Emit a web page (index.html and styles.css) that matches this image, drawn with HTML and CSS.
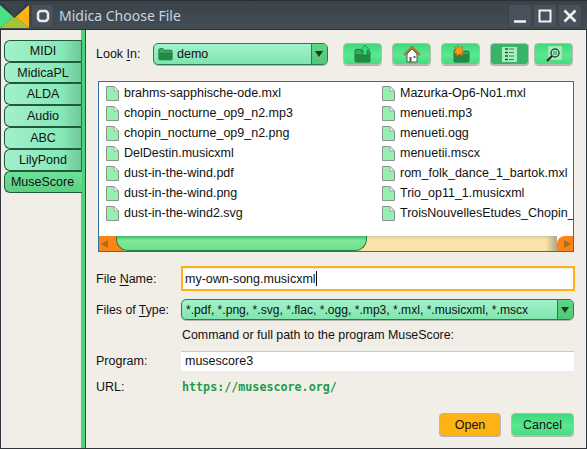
FILE: index.html
```html
<!DOCTYPE html>
<html lang="en">
<head>
  <meta charset="UTF-8" />
  <title>Midica Choose File</title>
  <link rel="stylesheet" href="styles.css">
</head>
<body>
  <svg class="defs" width="0" height="0">
    <symbol id="file" viewBox="0 0 13 15">
      <path d="M.5.5H8L12.500 5V14.500H.5Z" fill="#98f0b0" stroke="#85968c"/>
      <path d="M8 .5V5H12.500Z" fill="#fff" stroke="#9aa5a0"/>
    </symbol>
    <symbol id="folder" viewBox="0 0 18 16">
      <path d="M1 3.500Q1 1.500 3 1.500H6L8 3.500H16Q17 3.500 17 5V14Q17 15 16 15H2Q1 15 1 14Z" fill="#3ea760" stroke="#1d6b38"/>
      <path d="M1.500 6.500H16.500V14.500H1.500Z" fill="#208a45"/>
    </symbol>
  </svg>
  <header class="titlebar">
    <svg class="logo" width="29" height="24" viewBox="0 0 29 24">
      <path d="M0 0 14.500 12 0 24Z" fill="#4ddf83"/>
      <path d="M29 0 14.500 12 29 24Z" fill="#ffb213"/>
      <path d="M0 24 14.500 12 29 24Z" fill="#a5c43a"/>
      <path d="M0 0H3L14.500 12 26 0H29V1L14.500 14 0 1Z" fill="#2f3a44"/>
    </svg>
    <span class="wm-btn wm-app"><svg width="14" height="14" viewBox="0 0 14 14"><rect x="2" y="2" width="10" height="10" rx="3" fill="none" stroke="#e8ecec" stroke-width="2.500"/></svg></span>
    <span class="title">Midica Choose File</span>
    <span class="wm-btn"><svg width="14" height="14" viewBox="0 0 14 14"><path d="M1 12.500H13" stroke="#f2f2f2" stroke-width="2.500"/></svg></span>
    <span class="wm-btn"><svg width="14" height="14" viewBox="0 0 14 14"><rect x="1.500" y="1.500" width="11" height="11" fill="none" stroke="#f2f2f2" stroke-width="2"/></svg></span>
    <span class="wm-btn"><svg width="14" height="14" viewBox="0 0 14 14"><path d="M1.500 1.500 12.500 12.500M12.500 1.500 1.500 12.500" stroke="#f2f2f2" stroke-width="2.500"/></svg></span>
  </header>

  <div class="window">
    <nav class="tabs">
      <div class="tab">MIDI</div>
      <div class="tab">MidicaPL</div>
      <div class="tab">ALDA</div>
      <div class="tab">Audio</div>
      <div class="tab">ABC</div>
      <div class="tab">LilyPond</div>
      <div class="tab active">MuseScore</div>
    </nav>

    <main class="content">
      <div class="lookin">
        <label class="look-label">Look <u>I</u>n:</label>
        <div class="combo look-combo">
          <svg class="combo-folder" width="15" height="14"><use href="#folder"/></svg>
          <span class="combo-text">demo</span>
          <span class="combo-arrow"></span>
        </div>
        <div class="tools">
          <button class="tool">
            <svg width="18" height="18" viewBox="0 0 18 18">
              <use href="#folder" y="3" width="17" height="15"/>
              <path d="M11 0 15.500 5H13V10H9V5H6.500Z" fill="#38e07a" stroke="#157a3a" stroke-width=".7"/>
            </svg>
          </button>
          <button class="tool">
            <svg width="18" height="18" viewBox="0 0 18 18">
              <path d="M4 9V17H14V9L9 4Z" fill="#fff" stroke="#555"/>
              <path d="M6.500 12H8.500V17H6.500Z" fill="#7a5320"/>
              <path d="M10.500 11H12.500V13H10.500Z" fill="#3a66b0"/>
              <path d="M1 10 9 2 17 10" fill="none" stroke="#a87a28" stroke-width="2"/>
            </svg>
          </button>
          <button class="tool">
            <svg width="18" height="18" viewBox="0 0 18 18">
              <use href="#folder" x="1" y="3" width="17" height="15"/>
              <path d="M6 0 7.500 3.500 11 1.500 9.500 5 13 6 9.500 7.500 10.500 11 7 9 4.500 11.500 4.500 8 1 7 4 5 2.500 2 5 3.500Z" fill="#ff9a13" stroke="#d84a10" stroke-width=".5"/>
            </svg>
          </button>
          <button class="tool tool-on">
            <svg width="15" height="15" viewBox="0 0 15 15">
              <rect width="15" height="15" fill="#a6efbd"/>
              <path d="M3 2H6M3 5.500H6M3 9H6M3 12.500H6" stroke="#1c5a34" stroke-width="1.600"/>
              <path d="M7 2H12M7 5.500H12M7 9H12M7 12.500H12" stroke="#2f8a52" stroke-width="1"/>
            </svg>
          </button>
          <button class="tool">
            <svg width="18" height="18" viewBox="0 0 18 18">
              <rect x="3" y="1" width="14" height="14" fill="#a6efbd" stroke="#7ec898" stroke-width=".5"/>
              <circle cx="10" cy="8" r="4" fill="none" stroke="#1d5a34" stroke-width="1.500"/>
              <path d="M8 7H12M8 9H12" stroke="#2f8a52"/>
              <path d="M7 11 2 16" stroke="#222" stroke-width="2"/>
            </svg>
          </button>
        </div>
      </div>

      <div class="filebox">
        <div class="files">
          <div class="file"><svg width="13" height="15"><use href="#file"/></svg>brahms-sapphische-ode.mxl</div>
          <div class="file"><svg width="13" height="15"><use href="#file"/></svg>chopin_nocturne_op9_n2.mp3</div>
          <div class="file"><svg width="13" height="15"><use href="#file"/></svg>chopin_nocturne_op9_n2.png</div>
          <div class="file"><svg width="13" height="15"><use href="#file"/></svg>DelDestin.musicxml</div>
          <div class="file"><svg width="13" height="15"><use href="#file"/></svg>dust-in-the-wind.pdf</div>
          <div class="file"><svg width="13" height="15"><use href="#file"/></svg>dust-in-the-wind.png</div>
          <div class="file"><svg width="13" height="15"><use href="#file"/></svg>dust-in-the-wind2.svg</div>
          <div class="file"><svg width="13" height="15"><use href="#file"/></svg>Mazurka-Op6-No1.mxl</div>
          <div class="file"><svg width="13" height="15"><use href="#file"/></svg>menueti.mp3</div>
          <div class="file"><svg width="13" height="15"><use href="#file"/></svg>menueti.ogg</div>
          <div class="file"><svg width="13" height="15"><use href="#file"/></svg>menuetii.mscx</div>
          <div class="file"><svg width="13" height="15"><use href="#file"/></svg>rom_folk_dance_1_bartok.mxl</div>
          <div class="file"><svg width="13" height="15"><use href="#file"/></svg>Trio_op11_1.musicxml</div>
          <div class="file"><svg width="13" height="15"><use href="#file"/></svg>TroisNouvellesEtudes_Chopin_</div>
        </div>
        <div class="scrollbar">
          <span class="sb-arrow sb-left"></span>
          <div class="sb-track"><div class="sb-thumb"></div></div>
          <span class="sb-arrow sb-right"></span>
        </div>
      </div>

      <div class="form">
        <label class="name-row">File <u>N</u>ame:</label>
        <div class="input focused">my-own-song.musicxml<span class="caret"></span></div>
        <label class="type-row">Files of <u>T</u>ype:</label>
        <div class="combo type-combo">
          <span class="combo-text">*.pdf, *.png, *.svg, *.flac, *.ogg, *.mp3, *.mxl, *.musicxml, *.mscx</span>
          <span class="combo-arrow"></span>
        </div>
        <div class="hint">Command or full path to the program MuseScore:</div>
        <label class="program-row">Program:</label>
        <div class="input program">musescore3</div>
        <label class="url-row">URL:</label>
        <div class="url">https://musescore.org/</div>
      </div>

      <div class="actions">
        <button class="btn btn-open">Open</button>
        <button class="btn btn-cancel">Cancel</button>
      </div>
    </main>
  </div>
</body>
</html>
```

FILE: styles.css
```css
* {
  box-sizing: border-box;
}
html, body {
  height: 100%;
}
body {
  margin: 0;
  width: 587px;
  height: 449px;
  overflow: hidden;
  font-family: 'Liberation Sans', Arial, sans-serif;
  font-size: 12.5px;
  color: #111;
  background: #f1eee8;
  display: flex;
  flex-direction: column;
}
.defs {
  position: absolute;
}
svg {
  display: block;
  flex: none;
}
u {
  text-decoration-thickness: 1px;
  text-underline-offset: 2px;
}

/* title bar */
.titlebar {
  height: 30px;
  flex: none;
  display: flex;
  align-items: center;
  gap: 1px;
  padding: 1px 5px 0 0;
  background: linear-gradient(#3a424a, #444c54);
  border-top: 1px solid #2a3036;
  border-bottom: 1px solid #2a3036;
}
.logo {
  margin: 0 1px 0 0;
}
.title {
  flex: 1;
  margin-left: 4px;
  font-family: 'Noto Sans', sans-serif;
  font-size: 14px;
  color: #c6d6e0;
}
.wm-btn {
  width: 24px;
  height: 24px;
  display: flex;
  align-items: center;
  justify-content: center;
  border-radius: 3px;
  background: #49525a;
  box-shadow: inset 0 0 0 1px #3c444c;
}
.wm-app {
  width: 23px;
}

/* left tabs */
.window {
  flex: 1;
  display: flex;
  min-height: 0;
  border-left: 1px solid #30363c;
  border-right: 1px solid #30363c;
  border-bottom: 1px solid #30363c;
}
.tabs {
  width: 84px;
  flex: none;
  padding: 10px 0 0 3px;
  border-right: 4px solid #4fd27d;
  box-shadow: 1px 0 0 #245a38;
}
.tab {
  width: 78px;
  height: 22px;
  display: flex;
  align-items: center;
  justify-content: center;
  background: linear-gradient(90deg, #a3f0cc, #86e8b8 75%, #70c898);
  border: 1px solid #1f5a3a;
  border-right-color: #2c6a48;
  border-radius: 6px 0 0 6px;
}
.tab:nth-child(2) {
  height: 21px;
}
.tab.active {
  background: linear-gradient(#6ee09a, #5ccf85);
  border-right: 0;
  padding-right: 2px;
}

/* main column */
.content {
  flex: 1;
  min-width: 0;
  padding: 13px 12px 0 11px;
  display: flex;
  flex-direction: column;
}
.lookin {
  display: flex;
  align-items: center;
  height: 22px;
}
.look-label {
  width: 57px;
}
.combo {
  display: flex;
  align-items: center;
  border: 1px solid #2f7a50;
  border-radius: 5px;
  background: linear-gradient(#a3f2cb, #80e5ae);
  box-shadow: 0 1px 0 #b5b5ae;
}
.look-combo {
  width: 175px;
  height: 22px;
  padding-left: 4px;
}
.combo-folder {
  margin-right: 4px;
}
.combo-text {
  flex: 1;
  white-space: nowrap;
  overflow: hidden;
}
.combo-arrow {
  width: 16px;
  align-self: stretch;
  flex: none;
  position: relative;
  background: linear-gradient(#5fd687, #50c878);
  border-left: 1px solid #2f7a50;
  border-radius: 0 4px 4px 0;
}
.combo-arrow::after {
  content: "";
  position: absolute;
  left: 3px;
  top: 7px;
  border: 4px solid transparent;
  border-top: 6px solid #1c3a28;
  border-bottom: 0;
}
.tools {
  display: flex;
  margin-left: 15px;
  gap: 10px;
}
.tool {
  width: 39px;
  height: 22px;
  padding: 0;
  display: flex;
  align-items: center;
  justify-content: center;
  border: 1px solid #b4bcb6;
  border-radius: 4px;
  background: linear-gradient(#40d97c, #5ae890 55%, #46dc80);
  box-shadow: 0 1px 0 #b5b5ae;
}
.tool:nth-child(5) {
  margin-left: -5px;
}
.tool-on {
  background: #36b468;
}

/* file list */
.filebox {
  width: 476px;
  height: 171px;
  margin: 16px 0 0 2px;
  flex: none;
  display: flex;
  flex-direction: column;
  background: #fff;
  border: 1px solid #2f6ea8;
}
.files {
  flex: 1;
  padding: 1px 0 0 7px;
  display: grid;
  grid-template-rows: repeat(7, 20px);
  grid-auto-flow: column;
  grid-template-columns: 276px 1fr;
  overflow: hidden;
}
.file {
  display: flex;
  align-items: center;
  gap: 5px;
  white-space: nowrap;
  overflow: hidden;
}
.scrollbar {
  height: 15px;
  flex: none;
  display: flex;
}
.sb-arrow {
  width: 17px;
  flex: none;
  position: relative;
  background: #ff8417;
}
.sb-arrow::after {
  content: "";
  position: absolute;
  top: 4px;
  border: 4px solid transparent;
}
.sb-left::after {
  left: 2px;
  border-right: 7px solid #a8701a;
  border-left: 0;
}
.sb-right {
  width: 16px;
  border-radius: 8px 0 0 0;
}
.sb-right::after {
  right: 2px;
  border-left: 7px solid #a8701a;
  border-right: 0;
}
.sb-track {
  flex: 1;
  background:
    linear-gradient(90deg, #ff8417 8px, transparent 8px),
    linear-gradient(90deg, transparent 97.500%, #b0a68c),
    linear-gradient(#d8cca8, #fbe2a6 25%, #fbe2a6);
}
.sb-thumb {
  width: 251px;
  height: 100%;
  background: linear-gradient(#3cb868, #7ee898 30%, #6fe08e);
  border: 1px solid #2a7a4a;
  border-top: 0;
  border-radius: 0 0 12px 12px;
}

/* form */
.form {
  margin-top: 14px;
  display: grid;
  grid-template-columns: 85px 394px;
  align-items: center;
}
.name-row, .type-row, .program-row, .url-row {
  grid-column: 1;
}
.input {
  height: 25px;
  display: flex;
  align-items: center;
  padding-left: 4px;
  background: #fff;
}
.focused {
  border: 2px solid #ffb213;
  box-shadow: inset 0 1px 0 #e8e8ee;
  padding-left: 2px;
}
.caret {
  width: 1px;
  height: 15px;
  background: #111;
}
.type-combo {
  width: 393px;
  height: 21px;
  margin-top: 8px;
  padding-left: 4px;
  font-size: 12.1px;
}
.type-row {
  margin-top: 8px;
  font-size: 12.3px;
}
.hint {
  grid-column: 2;
  height: 31px;
  padding: 8px 0 0 1px;
  line-height: 15px;
  font-size: 12.4px;
}
.program {
  width: 393px;
  height: 20px;
  padding-left: 4px;
  box-shadow: inset 0 1px 0 #c8c8c4;
}
.url {
  height: 32px;
  line-height: 32px;
  padding-left: 1px;
  font-family: 'DejaVu Sans Mono', monospace;
  font-size: 11.7px;
  font-weight: bold;
  color: #1f9a4c;
}
.actions {
  display: flex;
  justify-content: flex-end;
  gap: 10px;
  margin-top: 10px;
}
.btn {
  height: 23px;
  padding: 0;
  font-family: inherit;
  font-size: 12.5px;
  color: #111;
  border: 1px solid #b4b8b0;
  border-radius: 4px;
  box-shadow: 0 1px 0 #b5b5ae;
}
.btn-open {
  width: 62px;
  background: #ffb213;
}
.btn-cancel {
  width: 63px;
  background: linear-gradient(#40d97c, #5ae890 55%, #46dc80);
}
```
